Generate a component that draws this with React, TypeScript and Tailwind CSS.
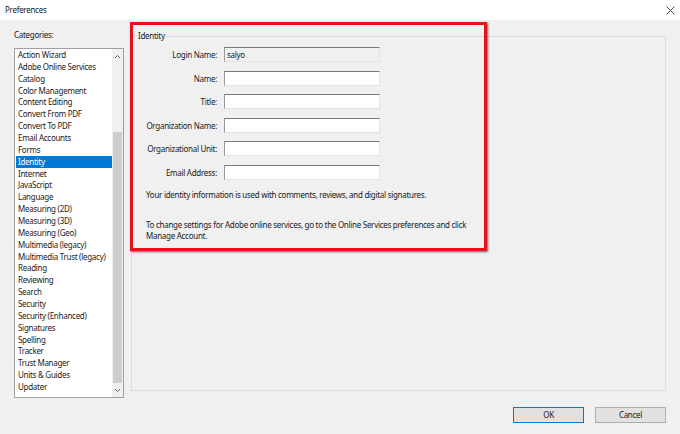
const categories = [
  'Action Wizard',
  'Adobe Online Services',
  'Catalog',
  'Color Management',
  'Content Editing',
  'Convert From PDF',
  'Convert To PDF',
  'Email Accounts',
  'Forms',
  'Identity',
  'Internet',
  'JavaScript',
  'Language',
  'Measuring (2D)',
  'Measuring (3D)',
  'Measuring (Geo)',
  'Multimedia (legacy)',
  'Multimedia Trust (legacy)',
  'Reading',
  'Reviewing',
  'Search',
  'Security',
  'Security (Enhanced)',
  'Signatures',
  'Spelling',
  'Tracker',
  'Trust Manager',
  'Units & Guides',
  'Updater',
]

const fields = [
  { label: 'Login Name:', value: 'salyo', readOnly: true },
  { label: 'Name:', value: '' },
  { label: 'Title:', value: '' },
  { label: 'Organization Name:', value: '' },
  { label: 'Organizational Unit:', value: '' },
  { label: 'Email Address:', value: '' },
]

const Chevron = ({ up }: { up?: boolean }) => (
  <svg width="7" height="5" viewBox="0 0 7 5" className="block">
    <path d={up ? 'M1 4 L3.5 1.5 L6 4' : 'M1 1 L3.5 3.5 L6 1'} fill="none" stroke="#606060" strokeWidth="1" />
  </svg>
)

const CategoryList = ({ selected }: { selected: string }) => (
  <div className="flex h-[350px] border border-[#a0a0a0] bg-white">
    <ul className="flex-1 pl-[1px]">
      {categories.map((c) => (
        <li
          key={c}
          className={
            'h-[11.86px] whitespace-nowrap pl-[2px] leading-[11.86px] ' +
            (c === selected ? 'bg-[#0078d7] text-white' : 'text-[#1a1a1a]')
          }
        >
          {c}
        </li>
      ))}
    </ul>
    <div className="flex w-[11px] flex-col items-center bg-[#f0f0f0]">
      <div className="flex h-[11px] items-end pb-[1px]">
        <Chevron up />
      </div>
      <div className="mt-[72px] h-[251px] w-[9px] bg-[#cdcdcd]" />
      <div className="flex flex-1 items-center">
        <Chevron />
      </div>
    </div>
  </div>
)

export default function App() {
  return (
    <div
      className="relative flex h-[434px] w-[680px] flex-col overflow-hidden bg-[#f0f0f0] text-[8px] tracking-[-0.28px] text-[#1a1a1a]"
      style={{ fontFamily: '"Noto Sans", "Open Sans", sans-serif' }}
    >
      {/* title bar */}
      <div className="flex h-[20px] shrink-0 items-center justify-between bg-white pl-[5px] pr-[5px]">
        <span className="leading-[12px]">Preferences</span>
        <svg width="9" height="9" viewBox="0 0 9 9">
          <path d="M0.5 0.5 L8.5 8.5 M8.5 0.5 L0.5 8.5" stroke="#333" strokeWidth="0.9" />
        </svg>
      </div>

      <div className="flex shrink-0 pl-[14px] pr-[14px] pt-[9px]">
        <div className="flex w-[110px] flex-col">
          <div className="mb-[7px] h-[12px] leading-[12px]">Categories:</div>
          <CategoryList selected="Identity" />
        </div>

        <fieldset className="ml-[7px] mt-[1px] h-[361px] flex-1 border border-[#dcdcdc]">
          <legend className="ml-[5px] px-[1px] leading-[12px]">Identity</legend>
          <div className="pl-[14px]">
            <div className="grid grid-cols-[71px_156px] items-center gap-x-[7px] gap-y-[8.6px] pt-[5px]">
              {fields.map((f) => (
                <div key={f.label} className="contents">
                  <span className="text-right leading-[15px] whitespace-nowrap">{f.label}</span>
                  <div
                    className={
                      'h-[15px] border border-t-[#7a7a7a] border-l-[#9a9a9a] border-r-[#e3e3e3] border-b-[#e3e3e3] pl-[2px] leading-[13px] ' +
                      (f.readOnly ? 'bg-[#f0f0f0]' : 'bg-white')
                    }
                  >
                    {f.value}
                  </div>
                </div>
              ))}
            </div>
            <p className="mt-[9px] leading-[12px] whitespace-nowrap">
              Your identity information is used with comments, reviews, and digital signatures.
            </p>
            <p className="mt-[18px] leading-[11px] whitespace-nowrap">
              To change settings for Adobe online services, go to the Online Services preferences and click
              <br />
              Manage Account.
            </p>
          </div>
        </fieldset>
      </div>

      <div className="mt-[9px] flex shrink-0 justify-end gap-[11px] pr-[14px]">
        <button className="h-[16px] w-[71px] border border-[#0078d7] bg-[#e1e1e1] leading-[14px]">OK</button>
        <button className="h-[16px] w-[71px] border border-[#adadad] bg-[#e1e1e1] leading-[14px]">Cancel</button>
      </div>

      {/* highlight frame drawn over the Identity group */}
      <div className="pointer-events-none absolute left-[130px] top-[22px] h-[229px] w-[357px] border-[3px] border-[#e5121b] shadow-[1px_1px_2px_rgba(0,0,0,0.6)]" />
    </div>
  )
}
